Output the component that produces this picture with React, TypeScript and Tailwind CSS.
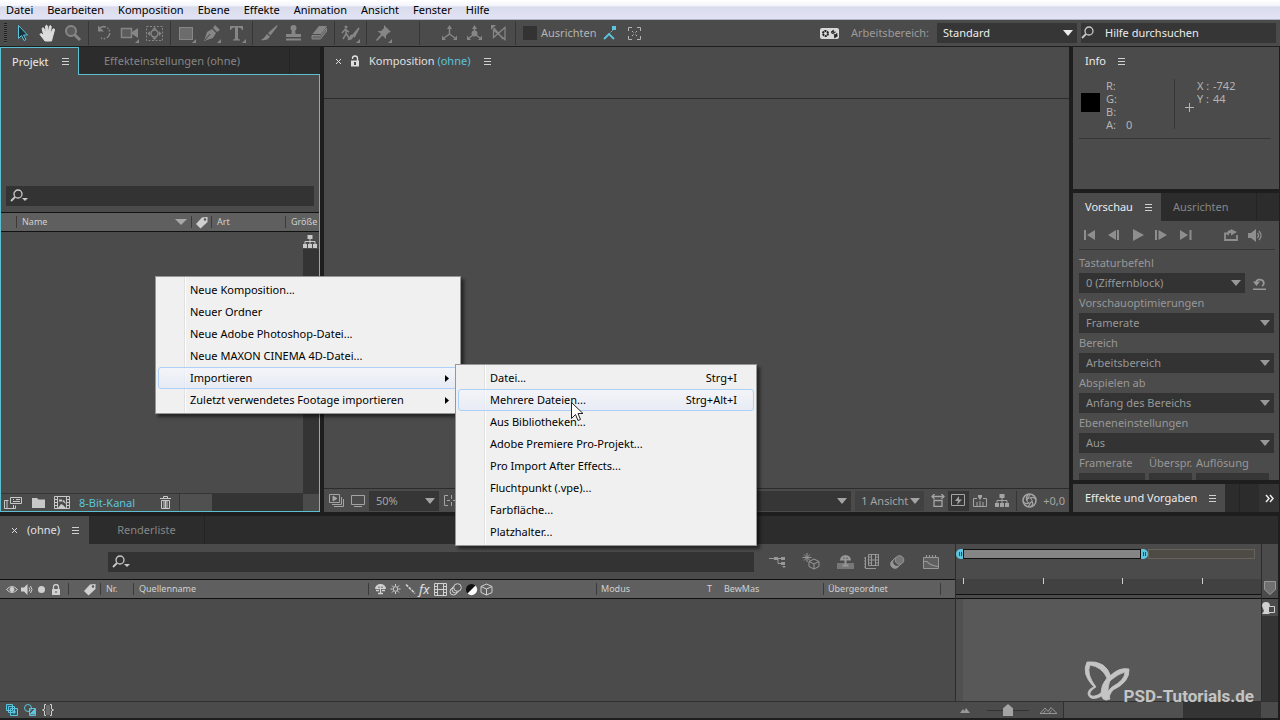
// src/App.tsx
import React, { useState } from "react";
import clsx from "clsx";

type MenuEntry = { label: string; shortcut?: string; sub?: boolean };

const MENU_BAR = ["Datei", "Bearbeiten", "Komposition", "Ebene", "Effekte", "Animation", "Ansicht", "Fenster", "Hilfe"];

const CONTEXT_MENU: MenuEntry[] = [
  { label: "Neue Komposition..." },
  { label: "Neuer Ordner" },
  { label: "Neue Adobe Photoshop-Datei..." },
  { label: "Neue MAXON CINEMA 4D-Datei..." },
  { label: "Importieren", sub: true },
  { label: "Zuletzt verwendetes Footage importieren", sub: true },
];

const IMPORT_MENU: MenuEntry[] = [
  { label: "Datei...", shortcut: "Strg+I" },
  { label: "Mehrere Dateien...", shortcut: "Strg+Alt+I" },
  { label: "Aus Bibliotheken..." },
  { label: "Adobe Premiere Pro-Projekt..." },
  { label: "Pro Import After Effects..." },
  { label: "Fluchtpunkt (.vpe)..." },
  { label: "Farbfläche..." },
  { label: "Platzhalter..." },
];

const PREVIEW_FIELDS = [
  { id: "optimierung", label: "Vorschauoptimierungen", value: "Framerate" },
  { id: "bereich", label: "Bereich", value: "Arbeitsbereich" },
  { id: "abspielen", label: "Abspielen ab", value: "Anfang des Bereichs" },
  { id: "ebenen", label: "Ebeneneinstellungen", value: "Aus" },
];

// all icons are drawn on a pixel grid, 1 unit = 1px
function Svg({ w = 16, h = 16, className, children }: { w?: number; h?: number; className?: string; children: React.ReactNode }) {
  return (
    <svg width={w} height={h} viewBox={`0 0 ${w} ${h}`} fill="none" stroke="currentColor" className={clsx("shrink-0", className)} aria-hidden="true">
      {children}
    </svg>
  );
}

const Corner = () => <path d="M20 20v-4l-4 4z" fill="currentColor" stroke="none" />;

const Burger = () => (
  <Svg w={7} h={9} className="text-[#d0d0d0]">
    <path d="M0 1.5h7M0 4.5h7M0 7.5h7" />
  </Svg>
);

const Lens = ({ arrow = false }: { arrow?: boolean }) => (
  <Svg w={20} h={14} className="text-[#c8c8c8]">
    <circle cx="8" cy="5" r="4" strokeWidth="1.3" />
    <path d="M5 8L1 12" strokeWidth="1.8" />
    {arrow && <path d="M12 9h6l-3 3z" fill="currentColor" stroke="none" />}
  </Svg>
);

const Tag = () => (
  <Svg w={14} h={13} className="text-[#d0d0d0]">
    <path d="M1 8L7 1.5L12.5 1L12.5 6L5.5 12.5z" fill="currentColor" stroke="none" />
    <circle cx="10" cy="3.5" r="1.2" fill="#555" stroke="none" />
  </Svg>
);

const Flow = ({ className }: { className?: string }) => (
  <Svg w={14} h={13} className={className}>
    <path d="M4.500 0h5v4h-5zM0 9h4v4H0zM5 9h4v4H5zM10 9h4v4h-4z" fill="currentColor" stroke="none" />
    <path d="M7 4v5M2 9V6.500h10V9" />
  </Svg>
);

const Film = () => (
  <Svg w={13} h={13}>
    <path d="M.5 .5h12v12H.5zM3.500 .5v12M9.500 .5v12M3.500 6.500h6M1 3.500h2M1 6.500h2M1 9.500h2M10 3.500h2M10 6.500h2M10 9.500h2" />
  </Svg>
);

const Cube = () => (
  <Svg w={13} h={13}>
    <path d="M6.500 1L12 3.500v6L6.500 12L1 9.500v-6zM1 3.500l5.500 2.500L12 3.500M6.500 6v6" />
  </Svg>
);

const Blur = () => (
  <Svg w={14} h={13}>
    <circle cx="4.500" cy="8.500" r="3.500" />
    <circle cx="6.500" cy="6.500" r="3.500" />
    <circle cx="8.500" cy="4.500" r="3.800" fill="#5a5a5a" />
  </Svg>
);

const Shy = () => (
  <Svg w={13} h={12}>
    <path d="M1 6a5.500 5 0 0 1 11 0z" fill="currentColor" stroke="none" />
    <path d="M6.500 1v9M4 10.500h5M2 7.500h3M8 7.500h3" strokeWidth="1.300" />
    <path d="M5 5v-1.500M8 5v-1.500" stroke="#555" />
  </Svg>
);

const Divider = () => <span className="mx-[3px] h-6 w-px shrink-0 bg-[#363636]" />;

function Tool({ label, className = "text-[#868686]", children }: { label: string; className?: string; children: React.ReactNode }) {
  return (
    <button type="button" aria-label={label} className={clsx("flex w-[25px] shrink-0 justify-center", className)}>
      <Svg w={21} h={21}>{children}</Svg>
    </button>
  );
}

function IconButton({ label, className, children }: { label: string; className?: string; children: React.ReactNode }) {
  return (
    <button type="button" aria-label={label} className={clsx("flex shrink-0 items-center justify-center", className)}>
      {children}
    </button>
  );
}

function Select({ id, value, label, className, field = "h-5 bg-[#333] pr-5 pl-[7px]" }: { id?: string; value: string; label?: string; className?: string; field?: string }) {
  return (
    <div className={clsx("relative", className)}>
      <select id={id} aria-label={label} className={clsx("w-full appearance-none text-current outline-none", field)}>
        <option>{value}</option>
      </select>
      <Svg w={10} h={6} className="pointer-events-none absolute top-1/2 right-1 -translate-y-1/2">
        <path d="M0 0h10L5 6z" fill="currentColor" stroke="none" />
      </Svg>
    </div>
  );
}

function Toolbar() {
  const [snap, setSnap] = useState(false);
  return (
    <div className="flex h-[26px] items-center bg-[#4b4b4b] text-[#868686]">
      <span className="mr-[3px] ml-1 h-5 w-[3px] bg-[repeating-linear-gradient(#222_0_1px,#555_1px_2px)]" />
      <Tool label="Auswahl" className="text-[#5cc4dc]">
        <path d="M6.500 2.500v13l3-3l2.500 5l2-1l-2.500-4.500h4z" fill="#17333d" />
      </Tool>
      <Tool label="Hand" className="text-[#dcdcdc]">
        <path d="M8 18L3 11.500q.5-1.500 2-.5l2 2L5 5.500Q6 4 7 5.500l2 4.500L8.500 3q1-1.500 2 0l.7 7l1.300-7q1.200-1 1.700.5L13.500 11L16 6q1.500-.7 1.500 1L15.500 14L14.500 18z" fill="currentColor" />
      </Tool>
      <Tool label="Zoom">
        <circle cx="9" cy="8" r="5" strokeWidth="2" fill="#5c5c5c" />
        <path d="M12.500 11.500L18 17" strokeWidth="3" />
      </Tool>
      <Divider />
      <Tool label="Drehen">
        <path d="M6 5a6 6 0 1 1 1 10" strokeWidth="1.500" strokeDasharray="6 1.500 1.500 1.500 1.500 1.500" />
        <path d="M4 2.500v6h6z" fill="currentColor" stroke="none" />
      </Tool>
      <Tool label="Kamera">
        <rect x="2.500" y="5.500" width="10" height="9" strokeWidth="1.500" fill="#5c5c5c" />
        <path d="M13 9l6-4v10l-6-4z" fill="currentColor" stroke="none" />
        <Corner />
      </Tool>
      <Tool label="Ausschnitt">
        <rect x="2.500" y="3.500" width="16" height="14" strokeDasharray="2 1.500" />
        <circle cx="10.500" cy="10.500" r="3.500" strokeWidth="1.500" />
        <path d="M8 6.500h5L10.500 4zM8 14.500h5L10.500 17zM6 8v5L3.500 10.500zM15 8v5l2.500-2.500z" fill="currentColor" stroke="none" />
      </Tool>
      <Divider />
      <Tool label="Rechteck">
        <rect x="3.500" y="4.500" width="13" height="12" fill="#6c6c6c" />
        <Corner />
      </Tool>
      <Tool label="Zeichenstift">
        <path d="M3 18L6 9l5-3l4 4l-3 5zM12 5l2-3l5 5l-3 2z" fill="currentColor" stroke="none" />
        <path d="M4 17l5-6" stroke="#444" />
        <Corner />
      </Tool>
      <Tool label="Text">
        <path d="M4 3h13v4h-1q-.5-2.500-4-2.500V15q0 1.500 2 1.500v1H7v-1q2 0 2-1.500V4.500Q5.500 4.500 5 7H4z" fill="currentColor" stroke="none" />
        <Corner />
      </Tool>
      <Divider />
      <Tool label="Pinsel">
        <path d="M19 2q1 .5 0 2l-6.500 8.500l-2.500-2.500zM9 11l3 2.500Q10 18 3 17q3-1.500 6-6z" fill="currentColor" stroke="none" />
      </Tool>
      <Tool label="Kopierstempel">
        <circle cx="10.500" cy="5" r="3" fill="currentColor" stroke="none" />
        <path d="M9 6h3l.5 5H18v3H3v-3h5.500zM3 15.500h15v2H3z" fill="currentColor" stroke="none" />
      </Tool>
      <Tool label="Radiergummi">
        <path d="M11 3h8l-6 8H4.500z" fill="currentColor" stroke="none" />
        <path d="M4 12.500h8.500L18.500 5v3.500L12.500 16H4z" fill="#6c6c6c" />
      </Tool>
      <Divider />
      <Tool label="Roto-Pinsel">
        <circle cx="6" cy="4" r="1.500" fill="currentColor" stroke="none" />
        <path d="M6 6v5l-3 5M6 10l3 5M2 10l3-3.500l4 2.500" strokeWidth="1.500" />
        <path d="M19 5l-6 7l1.500 1.500zM13 12.500q-1 4-5 4q2-1 3-4z" fill="currentColor" strokeWidth="1.500" />
        <Corner />
      </Tool>
      <Divider />
      <Tool label="Marionette">
        <path d="M12 2l7 7l-2 .5l-3 3V16l-3.500-3.500L5 18l-1-1l5-6L5.500 8H9l3-3z" fill="currentColor" stroke="none" />
        <Corner />
      </Tool>
      <span className="mr-[17px] ml-6 h-6 w-px bg-[#363636]" />
      <Tool label="Lokale Achse">
        <path d="M10.500 4v7L5 15M10.500 11L16 15" strokeWidth="1.500" />
        <path d="M8 6h5l-2.500-4zM3 17v-4.500l4 4.500zM18 17v-4.500L14 17z" fill="currentColor" stroke="none" />
      </Tool>
      <Tool label="Weltachse">
        <path d="M10.500 4v7L5 15M10.500 11L16 15" strokeWidth="1.500" />
        <circle cx="10.500" cy="10.500" r="3" fill="currentColor" stroke="none" />
        <path d="M8 6h5l-2.500-4zM3 17v-4.500l4 4.500zM18 17v-4.500L14 17z" fill="currentColor" stroke="none" />
      </Tool>
      <Tool label="Sichtachse">
        <path d="M5 5l9 11M4.500 14.500L16 4.500v12L4.500 7z" strokeWidth="1.300" />
        <path d="M2 2h5L2 7z" fill="currentColor" stroke="none" />
      </Tool>
      <Divider />
      <label className="flex items-center gap-1 text-[#b4b4b4]">
        <input
          type="checkbox"
          checked={snap}
          onChange={(e) => setSnap(e.target.checked)}
          className="ml-1 size-[14px] appearance-none bg-[#333] checked:bg-[#5cc4dc]"
        />
        Ausrichten
      </label>
      <Tool label="Kanten einrasten" className="text-[#5cc4dc]">
        <path d="M5 16l5-5l5 5" strokeWidth="1.800" />
        <path d="M10 11l6-6" strokeDasharray="2 1" />
        <path d="M13 3h4v4h-4z" fill="currentColor" stroke="none" />
      </Tool>
      <Tool label="Innen einrasten" className="text-[#b4b4b4]">
        <path d="M4.500 8V4.500H8M13 4.500h3.500V8M16.500 13v3.500H13M8 16.500H4.500V13M8 8l1.500 1.500M13 8l-1.500 1.500M8 13l1.500-1.500M13 13l-1.500-1.500" />
      </Tool>
      <div className="ml-auto flex items-center">
        <Svg w={19} h={11} className="mr-3">
          <rect width="19" height="11" rx="2" fill="#d8d8d8" stroke="none" />
          <circle cx="5.500" cy="5.500" r="2.500" stroke="#222" strokeWidth="2" strokeDasharray="2 .6" />
          <path d="M12 6V4h4M13.500 2L11 4l2.500 2zM17 5v3h-3M14.500 6l3 2l-3 2z" stroke="#222" fill="#222" strokeWidth=".6" />
        </Svg>
        <label htmlFor="workspace" className="mr-2 text-[#9c9c9c]">Arbeitsbereich:</label>
        <Select id="workspace" value="Standard" className="w-[140px] text-[#ececec]" field="h-5 bg-[#363636] pr-5 pl-[6px]" />
        <div className="mr-1 ml-1 flex h-5 w-[195px] items-center gap-1 bg-[#363636]">
          <Lens />
          <input aria-label="Hilfe durchsuchen" placeholder="Hilfe durchsuchen" className="w-full min-w-0 bg-transparent text-[#ececec] outline-none placeholder:text-[#ececec]" />
        </div>
      </div>
    </div>
  );
}

function ProjectPanel() {
  return (
    <section className="flex w-80 shrink-0 flex-col">
      <div className="flex h-7 shrink-0 bg-[#2c2c2c]">
        <div className="flex w-[79px] items-center justify-between border border-b-0 border-[#5cc0d2] bg-[#4b4b4b] pr-[9px] pl-[11px] text-[#ececec]">
          <button type="button">Projekt</button>
          <Burger />
        </div>
        <div className="flex flex-1 border-b border-[#5cc0d2]">
          <button type="button" className="w-[211px] border-r border-[#242424] pr-6 text-[#868686]">Effekteinstellungen (ohne)</button>
        </div>
      </div>
      <div className="flex flex-1 flex-col border border-t-0 border-[#5cc0d2] bg-[#4b4b4b]">
        <div className="mx-[5px] mt-[111px] flex h-5 items-center bg-[#333] pl-1">
          <Lens arrow />
          <input aria-label="Projekt durchsuchen" className="w-full min-w-0 bg-transparent text-[#d0d0d0] outline-none" />
        </div>
        <div className="mt-1.5 flex h-5 items-center border-y border-[#111] bg-[#5f5f5f] text-[9px] text-[#d0d0d0]">
          <div className="ml-[15px] flex h-3 flex-1 items-center justify-between border-l border-[#3a3a3a] pr-1 pl-[5px]">
            Name
            <Svg w={12} h={6} className="text-[#a8a8a8]"><path d="M0 0h12L6 6z" fill="currentColor" stroke="none" /></Svg>
          </div>
          <div className="flex h-3 w-[21px] items-center justify-center border-x border-[#3a3a3a]"><Tag /></div>
          <div className="flex h-3 w-[73px] items-center pl-[5px]">Art</div>
          <div className="flex h-3 w-[34px] items-center border-l border-[#3a3a3a] pl-[5px]">Größe</div>
        </div>
        <div className="flex flex-1 justify-end">
          <div className="flex w-4 flex-col">
            <Flow className="mt-[3px] mb-px text-[#c8c8c8]" />
            <div className="flex-1 bg-[#343434]" />
          </div>
        </div>
        <div className="flex h-[18px] items-center border-t border-[#363636] text-[#c8c8c8]">
          <IconButton label="Footage interpretieren" className="w-6">
            <Svg w={18} h={13}>
              <path d="M6.500 1.500h11v6h-11zM9 3.500h1M12 3.500h4M9 5.500h7M4.500 4.500h-4v8h11v-3M3 4.500v8M9.500 9v3.500" />
            </Svg>
          </IconButton>
          <IconButton label="Neuer Ordner" className="w-[27px]">
            <Svg w={13} h={11}><path d="M0 1h5l1.500 1.500H13V11H0z" fill="currentColor" stroke="none" /></Svg>
          </IconButton>
          <IconButton label="Neue Komposition" className="mr-2 w-[19px]">
            <Svg w={18} h={13}>
              <path d="M1.500 .5h15v12h-15zM4.500 .5v12M13.500 .5v12M2 3.500h2M2 6.500h2M2 9.500h2M14 3.500h2M14 6.500h2M14 9.500h2" />
              <path d="M5 12l3-4l2 1l3 3zM6 3.500h3v2H6zM9 5l2-1l2 4z" fill="currentColor" stroke="none" />
            </Svg>
          </IconButton>
          <button type="button" className="text-[#5cc4dc]">8-Bit-Kanal</button>
          <IconButton label="Löschen" className="mr-1 ml-auto w-5">
            <Svg w={11} h={13}><path d="M0 2.500h11M3.500 2V.5h4V2M1.500 4.500h8v8h-8zM4 5v7M5.500 5v7M7 5v7" /></Svg>
          </IconButton>
          <div className="flex h-full w-[140px] border-l border-[#363636]">
            <div className="w-8 bg-[#505050]" />
            <div className="flex-1 bg-[#343434]" />
            <div className="w-4" />
          </div>
        </div>
      </div>
    </section>
  );
}

function CompositionPanel() {
  return (
    <section className="flex min-w-0 flex-1 flex-col bg-[#4b4b4b]">
      <div className="flex h-7 items-center pl-2.5 text-[#e0e0e0]">
        <IconButton label="Schließen" className="w-2"><Svg w={7} h={7}><path d="M1 1l5 5M6 1L1 6" /></Svg></IconButton>
        <Svg w={10} h={12} className="mr-2 ml-2">
          <path d="M2.500 4V3.500a2.500 2.500 0 0 1 5 0V6" strokeWidth="1.300" />
          <path d="M1 5.500h8v6H1z" fill="currentColor" stroke="none" />
          <path d="M5 7v3" stroke="#4b4b4b" strokeWidth="2" />
        </Svg>
        <h2 className="mr-[14px] ml-px">Komposition <span className="text-[#5cc4dc]">(ohne)</span></h2>
        <Burger />
      </div>
      <div className="mt-[23px] flex-1 border-t border-[#2c2c2c]" />
      <div className="flex h-6 items-center border-t border-[#2c2c2c] text-[#a4a4a4]">
        <IconButton label="Vorschau immer anzeigen" className="w-[25px]">
          <Svg w={15} h={13}><path d="M.5 .5h10v8H.5zM3 10.500h9.500V3M5 12.500h9.500V5" /><path d="M4 2v5l4-2.500z" fill="currentColor" /></Svg>
        </IconButton>
        <IconButton label="Primärer Viewer" className="mr-[3px] w-[17px]">
          <Svg w={14} h={12}><path d="M.5 .5h13v9H.5zM3 11.500h8" /></Svg>
        </IconButton>
        <Select label="Zoomstufe" value="50%" className="w-[70px]" field="h-5 bg-[#363636] pr-5 pl-[7px]" />
        <IconButton label="Raster" className="w-6">
          <Svg w={15} h={11}><path d="M4 .5H.5v10H4M11 .5h3.500v10H11M7.500 0v4M7.500 7v4M3 5.500h3M9 5.500h3" /></Svg>
        </IconButton>
        <Select label="Kamera" value="" className="mr-1 flex-1" field="h-5 bg-[#363636]" />
        <Select label="Ansichten" value="1 Ansicht" className="w-[69px]" field="h-5 bg-[#414141] pl-[6px]" />
        <IconButton label="Pixelseitenverhältnis" className="ml-1 w-5">
          <Svg w={14} h={13}><path d="M3 6.500h8v6H3zM1 2.500h12M3.500 0L1 2.500L3.500 5M10.500 0L13 2.500L10.500 5" strokeWidth="1.300" /></Svg>
        </IconButton>
        <IconButton label="Schnelle Vorschau" className="h-5 w-[21px] bg-[#363636]">
          <Svg w={15} h={13}><path d="M.5 .5h13v11H.5z" /><path d="M8 2L4 7h3l-1 4l5-5.500H8z" fill="currentColor" stroke="none" /></Svg>
        </IconButton>
        <IconButton label="Zeitleiste" className="w-[22px]">
          <Svg w={14} h={12}><path d="M4 3.500H.5v8h13v-8H10M4 7v4M7 6v5M10 7v4M7 1v3" /><path d="M5 0h4v2L7 5L5 2z" fill="currentColor" stroke="none" /></Svg>
        </IconButton>
        <IconButton label="Flussdiagramm" className="w-[21px]"><Flow /></IconButton>
        <span className="mr-0.5 ml-1 h-5 w-px bg-[#363636]" />
        <IconButton label="Belichtung zurücksetzen" className="w-5">
          <Svg w={15} h={15}>
            <circle cx="7.500" cy="7.500" r="6.500" strokeWidth="1.500" />
            <circle cx="7.500" cy="7.500" r="2.500" />
            <path d="M5 8Q3 4 7 1M8 5q4-2 6 2M10 8q2 4-2 6M7 10q-4 2-6-2M5 6l3-4M9 9l-3 5" strokeWidth="1.200" />
          </Svg>
        </IconButton>
        <span className="mx-1">+0,0</span>
      </div>
    </section>
  );
}

function InfoPanel() {
  return (
    <section className="h-[142px] bg-[#4b4b4b]">
      <div className="flex h-7 items-center gap-3 pl-3 text-[#ececec]">
        <h2>Info</h2>
        <Burger />
      </div>
      <div className="mr-2 ml-1.5 flex h-16 border-b border-[#363636] pt-1 leading-[13px] text-[#b4b4b4]">
        <div className="mt-[14px] mr-[6px] ml-0.5 size-[19px] bg-black" />
        <dl className="grid w-[68px] grid-cols-[20px_1fr] self-start">
          <dt>R:</dt><dd />
          <dt>G:</dt><dd />
          <dt>B:</dt><dd />
          <dt>A:</dt><dd>0</dd>
        </dl>
        <div className="h-[50px] w-px bg-[#363636]" />
        <Svg w={9} h={9} className="mt-6 ml-[10px]"><path d="M4.500 0v9M0 4.500h9" /></Svg>
        <dl className="grid grid-cols-[14px_1fr] self-start pl-[3px]">
          <dt>X :</dt><dd className="pl-0.5">-742</dd>
          <dt>Y :</dt><dd className="pl-0.5">44</dd>
        </dl>
      </div>
    </section>
  );
}

function PreviewPanel() {
  return (
    <section className="flex flex-1 flex-col bg-[#4b4b4b] text-[#989898]">
      <div className="flex h-7 bg-[#2c2c2c]">
        <div className="flex w-[88px] items-center gap-3 bg-[#4b4b4b] pl-3 text-[#ececec]">
          <button type="button">Vorschau</button>
          <Burger />
        </div>
        <button type="button" className="w-24 border-r border-[#242424] pl-3 text-left text-[#868686]">Ausrichten</button>
      </div>
      <div className="mr-1 ml-1.5 flex h-[29px] items-center border-b border-[#363636] text-[#8e8e8e]">
        <IconButton label="Zum Anfang" className="w-5"><Svg w={11} h={10}><path d="M0 0h2v10H0zM11 0v10L3 5z" fill="currentColor" stroke="none" /></Svg></IconButton>
        <IconButton label="Bild zurück" className="ml-[5px] w-5"><Svg w={12} h={10}><path d="M8 0v10L0 5zM9 0h2v10H9z" fill="currentColor" stroke="none" /></Svg></IconButton>
        <IconButton label="Abspielen" className="ml-1 w-5"><Svg w={11} h={12}><path d="M0 0v12l11-6z" fill="currentColor" stroke="none" /></Svg></IconButton>
        <IconButton label="Bild vor" className="ml-[3px] w-5"><Svg w={12} h={10}><path d="M0 0h2v10H0zM3.500 0v10L12 5z" fill="currentColor" stroke="none" /></Svg></IconButton>
        <IconButton label="Zum Ende" className="ml-[5px] w-5"><Svg w={12} h={10}><path d="M0 0v10l8-5zM9.500 0h2v10h-2z" fill="currentColor" stroke="none" /></Svg></IconButton>
        <IconButton label="Schleife" className="mr-1 ml-auto w-5">
          <Svg w={14} h={12}><path d="M4 4.500H1V11h12V6" strokeWidth="1.800" /><path d="M3 5q0-4 4-4V0l6 3l-6 3.500V4Q4 4 5 7z" fill="currentColor" stroke="none" /></Svg>
        </IconButton>
        <IconButton label="Ton" className="mr-2.5 w-5">
          <Svg w={15} h={13}><path d="M0 4h3l5-4v13L3 9H0z" fill="currentColor" stroke="none" /><path d="M9.500 4q2 2.500 0 5M11 2q4 4.500 0 9" strokeWidth="1.300" /></Svg>
        </IconButton>
      </div>
      <div className="mt-[3px] pr-[5px] pl-1.5">
        <label htmlFor="shortcut" className="block h-5 leading-5">Tastaturbefehl</label>
        <div className="flex items-center">
          <Select id="shortcut" value="0 (Ziffernblock)" className="flex-1" />
          <IconButton label="Zurücksetzen" className="w-[29px]">
            <Svg w={13} h={13}><path d="M3 5a4 3.500 0 1 1 6 4M0 12.500h13" strokeWidth="1.800" /><path d="M0 4.500h7L3.500 9z" fill="currentColor" stroke="none" /></Svg>
          </IconButton>
        </div>
        {PREVIEW_FIELDS.map((f) => (
          <div key={f.id}>
            <label htmlFor={f.id} className="block h-5 leading-5">{f.label}</label>
            <Select id={f.id} value={f.value} />
          </div>
        ))}
        <div className="grid h-5 grid-cols-[70px_47px_1fr] leading-5 whitespace-nowrap">
          <span>Framerate</span>
          <span>Überspr.</span>
          <span>Auflösung</span>
        </div>
        <div className="grid h-[7px] grid-cols-[66px_43px_73px] gap-1">
          <span className="bg-[#363636]" />
          <span className="bg-[#363636]" />
          <span className="bg-[#363636]" />
        </div>
      </div>
    </section>
  );
}

function EffectsPanel() {
  return (
    <section className="flex h-7 bg-[#2c2c2c] text-[#ececec]">
      <div className="flex w-[152px] items-center gap-3 bg-[#4b4b4b] pl-3">
        <button type="button" className="whitespace-nowrap">Effekte und Vorgaben</button>
        <Burger />
      </div>
      <div className="w-[15px] border-r border-[#242424]" />
      <IconButton label="Weitere Panels" className="ml-auto w-5 bg-[#333]">
        <Svg w={9} h={9}><path d="M1 1l3 3.500L1 8M5 1l3 3.500L5 8" strokeWidth="1.500" /></Svg>
      </IconButton>
    </section>
  );
}

const TimelineHead = () => (
  <div className="flex h-5 items-center border-y border-[#111] bg-[#5f5f5f] text-[9px] text-[#d0d0d0] *:flex *:h-3 *:shrink-0 *:items-center">
    <div className="w-[68px] gap-[3px] pl-1.5">
      <Svg w={12} h={9}><path d="M.5 4.500q5.500-6 11 0q-5.500 6-11 0z" /><circle cx="6" cy="4.500" r="2" fill="currentColor" /></Svg>
      <Svg w={12} h={11}><path d="M0 3.500h3l3.500-3.500v11L3 7.500H0z" fill="currentColor" stroke="none" /><path d="M8 3.500q1.500 2 0 4M9.500 2q3 3.500 0 7" /></Svg>
      <Svg w={11} h={9}><circle cx="5.500" cy="4.500" r="3.500" fill="currentColor" stroke="none" /></Svg>
      <Svg w={12} h={11}><path d="M3.500 5V3a2.500 2.500 0 0 1 5 0v2" strokeWidth="1.300" /><path d="M2 5h8v6H2z" fill="currentColor" stroke="none" /><path d="M6 7v2" stroke="#555" /></Svg>
    </div>
    <div className="w-8 justify-end border-l border-[#3a3a3a] pr-[3px]"><Tag /></div>
    <div className="w-[33px] border-l border-[#3a3a3a] pl-[5px]">Nr.</div>
    <div className="flex-1 border-l border-[#3a3a3a] pl-[5px]">Quellenname</div>
    <div className="w-[228px] gap-0.5 border-l border-[#3a3a3a] pl-[5px]">
      <Shy />
      <Svg w={13} h={12}><circle cx="6.500" cy="6" r="2.300" /><path d="M6.500 1v2M6.500 9v2M1.500 6h2M9.500 6h2M3 2.500l1.500 1.500M8.500 8l1.500 1.500M10 2.500L8.500 4M4.500 8L3 9.500" /></Svg>
      <Svg w={13} h={12}><path d="M2 1.500l9 9" strokeWidth="1.600" strokeDasharray="3 1" /></Svg>
      <em className="w-[13px] text-[13px] leading-3 text-[#e0e0e0]">fx</em>
      <Film />
      <Blur />
      <Svg w={13} h={13}><circle cx="6.500" cy="6.500" r="5.500" fill="#111" stroke="none" /><path d="M10.500 2.500a5.500 5.500 0 0 1-8 8z" fill="#fff" stroke="none" /></Svg>
      <Cube />
    </div>
    <div className="w-[227px] border-l border-[#3a3a3a] pl-1">
      <span className="w-[106px]">Modus</span>
      <span className="w-[17px]">T</span>
      <span>BewMas</span>
    </div>
    <div className="w-[117px] border-l border-[#3a3a3a] pl-1">Übergeordnet</div>
    <div className="w-[15px] border-l border-[#3a3a3a]" />
  </div>
);

function Timeline() {
  const [zoom, setZoom] = useState(50);
  return (
    <section className="mt-1 mr-0.5 mb-0.5 flex flex-1 flex-col bg-[#4b4b4b]">
      <div className="flex h-7 bg-[#2c2c2c]">
        <div className="flex w-[89px] items-center bg-[#4b4b4b] pl-2.5 text-[#e0e0e0]">
          <IconButton label="Schließen" className="mr-[9px] w-2"><Svg w={7} h={7}><path d="M1 1l5 5M6 1L1 6" /></Svg></IconButton>
          <button type="button" className="mr-3">(ohne)</button>
          <Burger />
        </div>
        <button type="button" className="w-[116px] border-r border-[#242424] text-[#868686]">Renderliste</button>
      </div>

      <div className="flex flex-1">
        <div className="flex min-w-0 flex-1 flex-col">
          <div className="flex h-[35px] items-center pl-[108px]">
            <div className="flex h-5 flex-1 items-center bg-[#333] pl-1">
              <Lens arrow />
              <input aria-label="Zeitleiste durchsuchen" className="w-full min-w-0 bg-transparent text-[#d0d0d0] outline-none" />
            </div>
            <div className="flex w-[201px] items-center pl-[14px] text-[#989898]">
              <IconButton label="Mini-Flussdiagramm" className="w-[18px]">
                <Svg w={17} h={13}><path d="M0 3.500h6M9 3.500h4M9 3.500v5h4" /><path d="M5 2h4v3H5zM12 2h4v3h-4zM12 7h4v3h-4zM13 11h4l-2 2z" fill="currentColor" stroke="none" /></Svg>
              </IconButton>
              <IconButton label="3D-Entwurf" className="ml-4 w-[18px]">
                <Svg w={18} h={17}><path d="M12 6l5 2.500v5L12 16l-5-2.500v-5zM7 8.500l5 2.500l5-2.500M12 11v5M5 0v9M.5 4.500h9M2 1.500l6 6M8 1.500l-6 6" /></Svg>
              </IconButton>
              <IconButton label="Scheu" className="ml-4 w-[18px]">
                <Svg w={17} h={15}>
                  <path d="M0 9h17v6H0z" fill="#777" stroke="none" />
                  <path d="M3 6.500a5.500 5.500 0 0 1 11 0z" fill="currentColor" stroke="none" />
                  <path d="M8.500 3v8M5.500 11.500h6" strokeWidth="2" />
                  <path d="M7 5V3.500M10 5V3.500" stroke="#4b4b4b" />
                </Svg>
              </IconButton>
              <IconButton label="Frame-Überblendung" className="ml-2 w-[18px]">
                <Svg w={15} h={15}><path d="M4.500 .5h10v11h-10zM7.500 .5v11M11.500 .5v11M7.500 6h4M1.500 3v11.500H12M5 3h2M5 6h2M5 9h2M12 3h2M12 6h2M12 9h2" /><path d="M0 4h2M0 7h2M0 10h2M0 13h2" /></Svg>
              </IconButton>
              <IconButton label="Bewegungsunschärfe" className="ml-2 w-[18px]">
                <Svg w={15} h={14}><circle cx="5" cy="9" r="4.300" fill="currentColor" /><circle cx="7" cy="7" r="4.300" fill="#4b4b4b" /><circle cx="9.500" cy="5" r="4.300" fill="#777" /></Svg>
              </IconButton>
              <IconButton label="Diagrammeditor" className="ml-4 w-[18px]">
                <Svg w={16} h={14}><path d="M.5 2.500h15v11H.5z" fill="#606060" /><path d="M1 6.500h3q3 4 11 5M3.500 0v2M6.500 0v2M9.500 0v2M12.500 0v2" strokeWidth="1.200" /></Svg>
              </IconButton>
            </div>
          </div>
          <TimelineHead />
          <div className="flex-1" />
        </div>

        <div className="flex w-[306px] flex-col border-l border-[#2c2c2c]">
          <div className="mt-[5px] flex h-[10px] pr-1.5">
            <Svg w={7} h={10}><path d="M7 0H4Q0 1 0 5t4 5h3z" fill="#5cc4dc" stroke="none" /><path d="M3.500 3v4M5.500 3v4" stroke="#1d5563" /></Svg>
            <div className="w-[178px] border border-[#111] bg-[#858585]" />
            <Svg w={7} h={10}><path d="M0 0h3q4 1 4 5T3 10H0z" fill="#5cc4dc" stroke="none" /><path d="M2.500 3v4M4.500 3v4" stroke="#1d5563" /></Svg>
            <div className="flex-1 border border-[#66625c] bg-[#4e4a45]" />
          </div>
          <Svg w={305} h={35} className="mt-[5px] text-[#d0d0d0]">
            <rect x="0" y="15" width="305" height="15" fill="#414141" stroke="none" />
            <path d="M7.500 14v6M87.500 14v6M166.500 14v6M246.500 14v6" />
            <path d="M0 30.500h305M0 34.500h305" stroke="#111" />
          </Svg>
          <div className="flex flex-1 bg-[#585858]">
            <div className="w-[7px] bg-[#505050]" />
          </div>
        </div>
        <div className="flex w-[17px] flex-col border-l border-[#2c2c2c]">
          <Svg w={12} h={14} className="mt-[37px] ml-0.5 text-[#989898]"><path d="M.5 .5h11v8L6 13.500L.5 8.500z" fill="#707070" /></Svg>
          <div className="mt-[3px] h-px bg-[#111]" />
          <Svg w={14} h={13} className="mt-[3px] mb-px text-[#d0d0d0]"><path d="M0 4a4 4 0 0 1 8 0v1H6v5l2 2H0l2-3z" fill="currentColor" stroke="none" /><path d="M6.500 4.500h6v6h-6z" fill="#4b4b4b" /></Svg>
          <div className="flex-1 bg-[#343434]" />
        </div>
      </div>

      <div className="flex h-[17px] items-center border-t border-[#303030]">
        <div className="flex flex-1 gap-[6px] pl-1.5 text-[#5cc4dc]">
          <IconButton label="Ebenenschalter">
            <Svg w={12} h={12}><path d="M.5 .5h6v6h-6zM2.500 2.500h6v6h-6zM4.500 4.500h7v7h-7z" fill="#2a5c69" /><path d="M7 7h2v2H7z" fill="currentColor" /></Svg>
          </IconButton>
          <IconButton label="Modi">
            <Svg w={12} h={12}><circle cx="4" cy="4" r="3.500" /><path d="M5.500 4.500h6v7h-6z" /><path d="M6 10l5-5v5z" fill="currentColor" /></Svg>
          </IconButton>
          <IconButton label="In/Out" className="text-[#d0d0d0]">
            <Svg w={12} h={12}><path d="M4 .5H2.500v4.500l-2 1l2 1v4.500H4M8 .5h1.500v4.500l2 1l-2 1v4.500H8" /><path d="M4 1h4v10H4z" fill="#6a6a6a" stroke="none" /></Svg>
          </IconButton>
        </div>
        <div className="flex h-full w-[322px] items-center">
          <Svg w={10} h={5} className="mr-[17px] ml-1 text-[#989898]"><path d="M0 5l3-4l1.500 2L6 0l4 5z" fill="currentColor" stroke="none" /></Svg>
          <input
            type="range"
            aria-label="Zoom der Zeitleiste"
            value={zoom}
            onChange={(e) => setZoom(Number(e.target.value))}
            className="h-3 w-[42px] appearance-none bg-[linear-gradient(#333,#333)] bg-[length:100%_1px] bg-center bg-no-repeat [&::-webkit-slider-thumb]:h-3 [&::-webkit-slider-thumb]:w-[10px] [&::-webkit-slider-thumb]:appearance-none [&::-webkit-slider-thumb]:bg-[#a4a4a4] [&::-webkit-slider-thumb]:[clip-path:polygon(50%_0,100%_35%,100%_100%,0_100%,0_35%)]"
          />
          <Svg w={17} h={7} className="ml-[11px] text-[#989898]"><path d="M0 6.500L5 1l3 3.500L11 .5l6 6zM3 6.500l2.500-3M9 6.500l2.500-3" /></Svg>
          <div className="ml-1.5 flex h-full flex-1 border-l border-[#303030]">
            <div className="flex-1 bg-[#505050]" />
            <div className="w-[78px] bg-[#343434]" />
            <div className="w-[17px]" />
          </div>
        </div>
      </div>
    </section>
  );
}

function PopupMenu({ items, active, className }: { items: MenuEntry[]; active: number; className?: string }) {
  return (
    <div
      role="menu"
      className={clsx(
        "absolute border border-[#979797] bg-[#f0f0f0] bg-[linear-gradient(90deg,#e0e0e0_50%,#fff_50%)] bg-[length:2px_100%] bg-[position:28px_0] bg-no-repeat p-0.5 text-black shadow-[3px_3px_3px_rgba(0,0,0,0.5)]",
        className,
      )}
    >
      {items.map((item, i) => (
        <button
          key={item.label}
          type="button"
          role="menuitem"
          className={clsx(
            "flex h-[22px] w-full items-center justify-between rounded-[3px] border pl-[31px] whitespace-nowrap",
            item.sub ? "pr-2" : "pr-4",
            i === active ? "border-[#aecff7] bg-[linear-gradient(rgba(245,247,252,0.7),rgba(225,232,248,0.6))]" : "border-transparent",
          )}
        >
          {item.label}
          {item.shortcut && <span>{item.shortcut}</span>}
          {item.sub && <Svg w={4} h={7}><path d="M0 0v7l4-3.500z" fill="currentColor" stroke="none" /></Svg>}
        </button>
      ))}
    </div>
  );
}

function Watermark() {
  return (
    <div className="pointer-events-none absolute right-[26px] bottom-4 flex items-end text-[#c4c4c4]">
      <Svg w={46} h={42} className="-mr-[6px] mb-0.5">
        <path d="M3 2Q22 0 27 17Q24 24 23 40Q18 40 18 36Q6 42 4 34Q4 29 10 27Q-3 14 3 2zM6 5Q2 14 12 27Q5 31 6 35Q10 38 17 33Q17 25 23 18Q18 7 6 5z" fill="currentColor" strokeWidth=".8" fillRule="evenodd" />
        <path d="M45 9Q36 7 27 15Q17 23 18 34Q20 42 26 39Q24 36 29 30Q46 22 45 9zM41 12Q41 20 28 27Q22 32 22 36Q19 27 27 20Q34 14 41 12z" fill="currentColor" strokeWidth=".8" fillRule="evenodd" />
      </Svg>
      <span className="font-['Roboto',sans-serif] text-[17px] leading-4 font-bold">PSD-Tutorials.de</span>
    </div>
  );
}

export default function App() {
  return (
    <div className="relative flex min-h-screen flex-col overflow-hidden bg-[#1e1e1e] font-['Noto_Sans',sans-serif] text-[11px] leading-4">
      <nav className="flex h-5 items-center gap-[14px] border-b border-[#b0b4c8] bg-[linear-gradient(#fff_0,#f4f5fb_30%,#d9dcec_36%,#e2e3f4_100%)] pl-1.5 text-black">
        {MENU_BAR.map((m) => (
          <button key={m} type="button">{m}</button>
        ))}
      </nav>
      <Toolbar />
      <main className="mt-px mr-px flex gap-1">
        <ProjectPanel />
        <CompositionPanel />
        <aside className="flex w-[206px] shrink-0 flex-col gap-1">
          <InfoPanel />
          <PreviewPanel />
          <EffectsPanel />
        </aside>
      </main>
      <Timeline />
      <Watermark />

      <PopupMenu items={CONTEXT_MENU} active={4} className="top-[276px] left-[155px] w-[306px]" />
      <PopupMenu items={IMPORT_MENU} active={1} className="top-[364px] left-[455px] w-[302px]" />
      <Svg w={13} h={20} className="pointer-events-none absolute top-[402px] left-[571px]">
        <path d="M.5 .5v16l4-4l2.500 6l2.500-1l-2.500-6h5z" fill="#fff" stroke="#222" />
      </Svg>
    </div>
  );
}
